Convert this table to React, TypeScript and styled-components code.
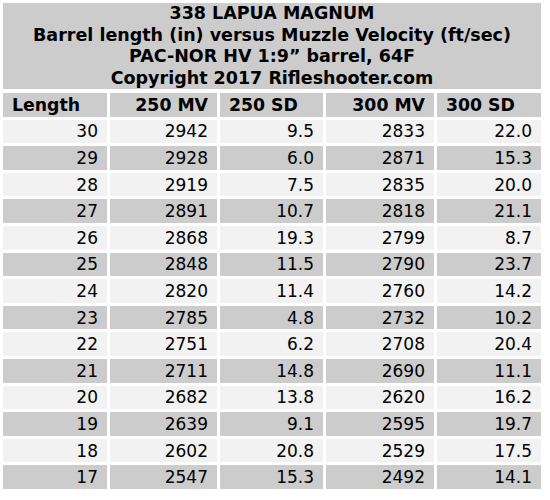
import * as React from 'react';
import styled, { createGlobalStyle } from 'styled-components';

const GlobalStyle = createGlobalStyle`
	body {
		margin: 0;
		background: #ffffff;
		font-family: 'DejaVu Sans', Verdana, sans-serif;
		color: #000000;
	}
`;

const Page = styled.div`
	padding: 3px;
	width: 538px;
`;

const TitleBlock = styled.div`
	background-color: #cccccc;
	height: 86px;
	display: flex;
	flex-direction: column;
	justify-content: center;
	text-align: center;
	font-weight: bold;
	font-size: 17.5px;
	line-height: 21.5px;
`;

const Grid = styled.div`
	margin-top: 4px;
	display: grid;
	grid-template-columns: 104px 107px 103px 108px 104px;
	grid-auto-rows: 23.6px;
	gap: 3px;
`;

const Cell = styled.div<{ $head?: boolean; $left?: boolean; $dark?: boolean }>`
	display: flex;
	align-items: center;
	justify-content: ${(p) => (p.$left ? 'flex-start' : 'flex-end')};
	padding: ${(p) => (p.$left ? '0 0 0 9px' : '0 9px 0 0')};
	font-size: ${(p) => (p.$head ? '17.3px' : '17px')};
	font-weight: ${(p) => (p.$head ? 'bold' : 'normal')};
	background-color: ${(p) => (p.$dark ? '#cccccc' : '#f2f2f2')};
	white-space: nowrap;
`;

type Row = [number, number, string, number, string];

const rows: Row[] = [
	[30, 2942, '9.5', 2833, '22.0'],
	[29, 2928, '6.0', 2871, '15.3'],
	[28, 2919, '7.5', 2835, '20.0'],
	[27, 2891, '10.7', 2818, '21.1'],
	[26, 2868, '19.3', 2799, '8.7'],
	[25, 2848, '11.5', 2790, '23.7'],
	[24, 2820, '11.4', 2760, '14.2'],
	[23, 2785, '4.8', 2732, '10.2'],
	[22, 2751, '6.2', 2708, '20.4'],
	[21, 2711, '14.8', 2690, '11.1'],
	[20, 2682, '13.8', 2620, '16.2'],
	[19, 2639, '9.1', 2595, '19.7'],
	[18, 2602, '20.8', 2529, '17.5'],
	[17, 2547, '15.3', 2492, '14.1'],
];

// left-aligned headers are the ones with padding on the left
const headers: Array<[string, boolean]> = [
	['Length', true],
	['250 MV', false],
	['250 SD', true],
	['300 MV', false],
	['300 SD', true],
];

const App = () => {
	return (
		<Page>
			<GlobalStyle />
			<TitleBlock>
				<div>338 LAPUA MAGNUM</div>
				<div>Barrel length (in) versus Muzzle Velocity (ft/sec)</div>
				<div>PAC-NOR HV 1:9” barrel, 64F</div>
				<div>Copyright 2017 Rifleshooter.com</div>
			</TitleBlock>
			<Grid>
				{headers.map(([label, left]) => (
					<Cell key={label} $head $left={left} $dark>
						{label}
					</Cell>
				))}
				{rows.map((row, i) =>
					row.map((value, j) => (
						<Cell key={`${i}-${j}`} $dark={i % 2 === 1}>
							{value}
						</Cell>
					))
				)}
			</Grid>
		</Page>
	);
};

export default App;
